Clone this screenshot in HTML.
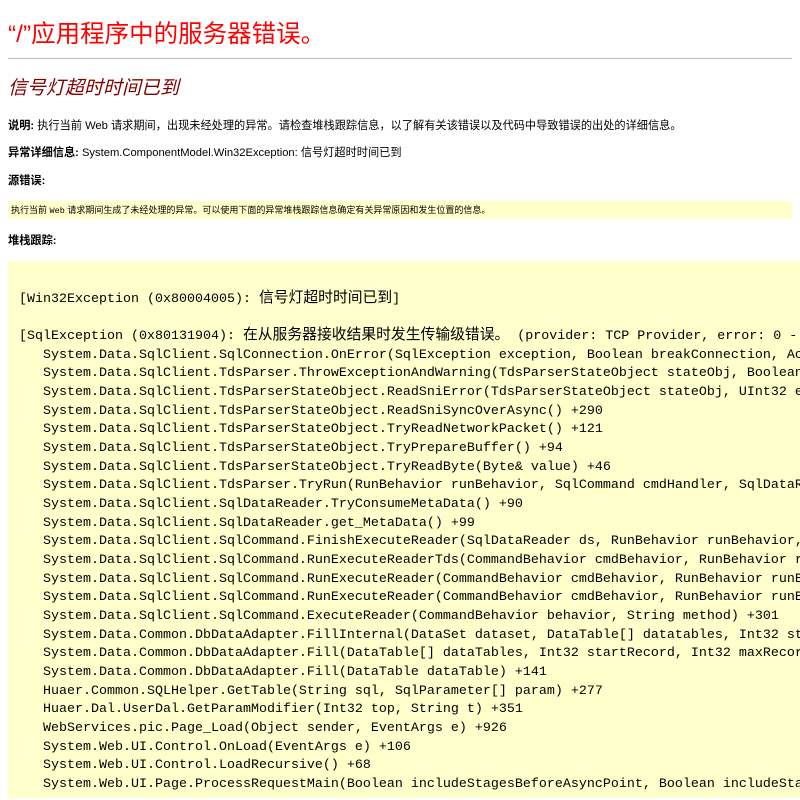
<!DOCTYPE html>
<html><head><meta charset="utf-8"><style>
html,body{margin:0;padding:0;background:#fff;width:800px;height:800px;overflow:hidden}
body{font-family:"Liberation Sans","Noto Sans CJK SC",sans-serif;color:#000;position:relative}
.a{position:absolute;white-space:nowrap}
h1{position:absolute;left:8px;top:19px;margin:0;font-weight:normal;font-size:24.5px;color:#ff0000;line-height:32px;font-family:"Liberation Sans","Noto Sans CJK SC",sans-serif}
hr{position:absolute;left:8px;top:58px;width:784px;margin:0;border:0;border-top:1px solid #c0c0c0;height:0}
h2{position:absolute;left:8px;top:76px;margin:0;font-weight:normal;font-style:italic;font-size:19px;color:#800000;line-height:26px}
.t{font-size:11.2px;line-height:14px}
.src{position:absolute;left:8px;top:201px;width:784px;height:18px;background:#ffffcc}
.src span{position:absolute;left:3px;top:3px;font-size:9px;line-height:12px;white-space:nowrap}
.src tt{font-family:"Liberation Mono",monospace;font-size:8.5px}
pre{position:absolute;left:8px;top:261px;width:800px;height:537px;margin:0;background:#ffffcc;font-family:"Liberation Mono","Noto Sans CJK SC",monospace;font-size:13.33px;line-height:18.65px;padding:0 0 0 11px;box-sizing:border-box;padding-top:11.2px;overflow:hidden;color:#000}
pre i{font-style:normal;font-size:14.8px;font-family:"Noto Sans CJK SC",sans-serif;line-height:10px}
</style></head><body>
<h1>“/”应用程序中的服务器错误。</h1>
<hr>
<h2>信号灯超时时间已到</h2>
<div class="a t" style="left:8px;top:119px"><b>说明:</b> 执行当前 Web 请求期间，出现未经处理的异常。请检查堆栈跟踪信息，以了解有关该错误以及代码中导致错误的出处的详细信息。</div>
<div class="a t" style="left:8px;top:146px"><b>异常详细信息:</b> System.ComponentModel.Win32Exception: 信号灯超时时间已到</div>
<div class="a t" style="left:8px;top:174px"><b>源错误:</b></div>
<div class="src"><span>执行当前 <tt>Web</tt> 请求期间生成了未经处理的异常。可以使用下面的异常堆栈跟踪信息确定有关异常原因和发生位置的信息。</span></div>
<div class="a t" style="left:8px;top:234px"><b>堆栈跟踪:</b></div>
<pre>

[Win32Exception (0x80004005): <i>信号灯超时时间已到</i>]

[SqlException (0x80131904): <i>在从服务器接收结果时发生传输级错误。</i> (provider: TCP Provider, error: 0 - <i>信号灯超时时间已到。</i>)]
   System.Data.SqlClient.SqlConnection.OnError(SqlException exception, Boolean breakConnection, Action`1 wrapCloseInAction) +2442126
   System.Data.SqlClient.TdsParser.ThrowExceptionAndWarning(TdsParserStateObject stateObj, Boolean callerHasConnectionLock, Boolean asyncClose) +5736904
   System.Data.SqlClient.TdsParserStateObject.ReadSniError(TdsParserStateObject stateObj, UInt32 error) +285
   System.Data.SqlClient.TdsParserStateObject.ReadSniSyncOverAsync() +290
   System.Data.SqlClient.TdsParserStateObject.TryReadNetworkPacket() +121
   System.Data.SqlClient.TdsParserStateObject.TryPrepareBuffer() +94
   System.Data.SqlClient.TdsParserStateObject.TryReadByte(Byte&amp; value) +46
   System.Data.SqlClient.TdsParser.TryRun(RunBehavior runBehavior, SqlCommand cmdHandler, SqlDataReader dataStream) +276
   System.Data.SqlClient.SqlDataReader.TryConsumeMetaData() +90
   System.Data.SqlClient.SqlDataReader.get_MetaData() +99
   System.Data.SqlClient.SqlCommand.FinishExecuteReader(SqlDataReader ds, RunBehavior runBehavior, String resetOptionsString) +604
   System.Data.SqlClient.SqlCommand.RunExecuteReaderTds(CommandBehavior cmdBehavior, RunBehavior runBehavior, Boolean returnStream) +3303
   System.Data.SqlClient.SqlCommand.RunExecuteReader(CommandBehavior cmdBehavior, RunBehavior runBehavior, Boolean returnStream) +667
   System.Data.SqlClient.SqlCommand.RunExecuteReader(CommandBehavior cmdBehavior, RunBehavior runBehavior, Boolean returnStream) +83
   System.Data.SqlClient.SqlCommand.ExecuteReader(CommandBehavior behavior, String method) +301
   System.Data.Common.DbDataAdapter.FillInternal(DataSet dataset, DataTable[] datatables, Int32 startRecord) +121
   System.Data.Common.DbDataAdapter.Fill(DataTable[] dataTables, Int32 startRecord, Int32 maxRecords) +177
   System.Data.Common.DbDataAdapter.Fill(DataTable dataTable) +141
   Huaer.Common.SQLHelper.GetTable(String sql, SqlParameter[] param) +277
   Huaer.Dal.UserDal.GetParamModifier(Int32 top, String t) +351
   WebServices.pic.Page_Load(Object sender, EventArgs e) +926
   System.Web.UI.Control.OnLoad(EventArgs e) +106
   System.Web.UI.Control.LoadRecursive() +68
   System.Web.UI.Page.ProcessRequestMain(Boolean includeStagesBeforeAsyncPoint, Boolean includeStagesAfterAsyncPoint) +3785
</pre>
</body></html>
